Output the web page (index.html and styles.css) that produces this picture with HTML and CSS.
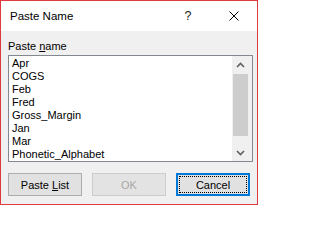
FILE: index.html
```html
<!DOCTYPE html>
<html>
<head>
<meta charset="utf-8">
<link rel="stylesheet" href="styles.css">
</head>
<body>
<div class="dialog">
  <div class="titlebar">
    <div class="title">Paste Name</div>
    <div class="cap help">?</div>
    <div class="cap close">
      <svg width="10" height="10" viewBox="0 0 10 10"><path d="M0.5 0.5 L9.5 9.5 M9.5 0.5 L0.5 9.5" stroke="#000" stroke-width="1" fill="none"/></svg>
    </div>
  </div>
  <div class="body">
    <div class="label">Paste <u>n</u>ame</div>
    <div class="listbox">
      <ul class="items">
        <li>Apr</li>
        <li>COGS</li>
        <li>Feb</li>
        <li>Fred</li>
        <li>Gross_Margin</li>
        <li>Jan</li>
        <li>Mar</li>
        <li>Phonetic_Alphabet</li>
      </ul>
      <div class="scrollbar">
        <div class="arrow">
          <svg width="9" height="6" viewBox="0 0 9 6"><path d="M1 5 L4.5 1.5 L8 5" stroke="#606060" stroke-width="1.6" fill="none"/></svg>
        </div>
        <div class="track"><div class="thumb"></div></div>
        <div class="arrow">
          <svg width="9" height="6" viewBox="0 0 9 6"><path d="M1 1 L4.5 4.5 L8 1" stroke="#606060" stroke-width="1.6" fill="none"/></svg>
        </div>
      </div>
    </div>
    <div class="buttons">
      <button class="btn"><span class="txt">Paste <u>L</u>ist</span></button>
      <button class="btn disabled"><span class="txt">OK</span></button>
      <button class="btn default"><span class="focus">Cancel</span></button>
    </div>
  </div>
</div>
</body>
</html>
```

FILE: styles.css
```css
html, body {
  margin: 0;
  padding: 0;
  background: #ffffff;
}

body {
  font-family: "Liberation Sans", Arial, sans-serif;
  font-size: 11px;
  color: #000;
}

.dialog {
  width: 258px;
  height: 205px;
  box-sizing: border-box;
  border: 1px solid #e0393e;
  display: flex;
  flex-direction: column;
}

.titlebar {
  height: 30px;
  background: #ffffff;
  display: flex;
  align-items: center;
}

.title {
  flex: 1;
  padding-left: 9px;
  font-size: 11.5px;
  line-height: 30px;
}

.cap {
  width: 46px;
  height: 30px;
  display: flex;
  align-items: center;
  justify-content: center;
}

.help {
  font-size: 12.5px;
  color: #1a1a1a;
}

.body {
  flex: 1;
  background: #f0f0f0;
  padding: 9px 4px 8px 7px;
  display: flex;
  flex-direction: column;
}

.label {
  height: 13px;
  line-height: 13px;
}

.listbox {
  margin-top: 2px;
  height: 107px;
  box-sizing: border-box;
  border: 1px solid #828790;
  background: #ffffff;
  display: flex;
}

.items {
  flex: 1;
  margin: 0;
  padding: 1px 0 0 3px;
  list-style: none;
}

.items li {
  line-height: 13px;
  height: 13px;
  white-space: nowrap;
}

.scrollbar {
  width: 20px;
  background: #f0f0f0;
  display: flex;
  flex-direction: column;
}

.arrow {
  width: 17px;
  height: 17px;
  display: flex;
  align-items: center;
  justify-content: center;
}

.track {
  flex: 1;
  padding: 1px 0 0 1px;
}

.thumb {
  width: 15px;
  height: 62px;
  background: #cdcdcd;
}

.buttons {
  margin-top: 11px;
  display: flex;
  gap: 10px;
}

.btn {
  width: 74px;
  height: 23px;
  box-sizing: border-box;
  border: 1px solid #adadad;
  background: #e1e1e1;
  font-family: "Liberation Sans", Arial, sans-serif;
  font-size: 11px;
  color: #000;
  padding: 0;
  margin: 0;
  display: flex;
  align-items: center;
  justify-content: center;
}

.txt {
  white-space: pre;
}

.btn.disabled {
  background: #e3e3e3;
  border-color: #cccccc;
  color: #a8a8a8;
}

.btn.default {
  border: 2px solid #0078d7;
  padding: 1px;
}

.focus {
  width: 100%;
  height: 100%;
  box-sizing: border-box;
  border: 1px dotted #000;
  display: flex;
  align-items: center;
  justify-content: center;
}
```
